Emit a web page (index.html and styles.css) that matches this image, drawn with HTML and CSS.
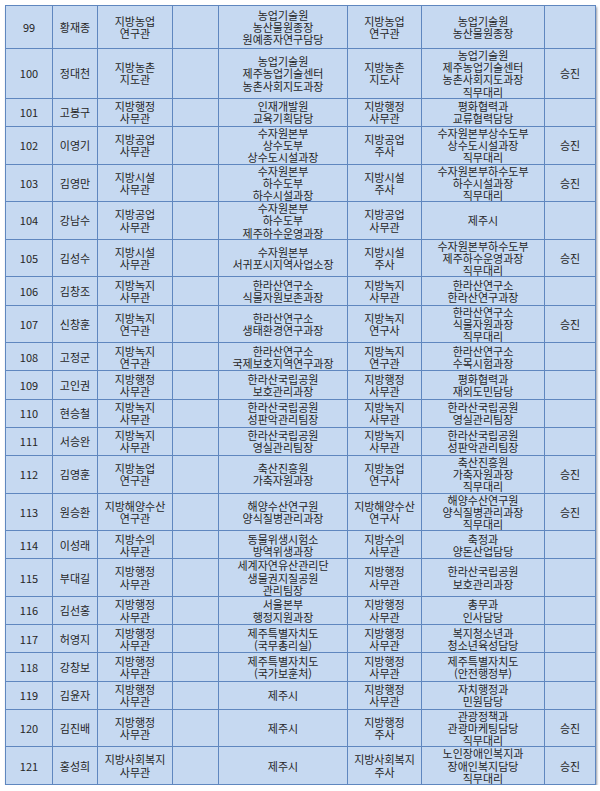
FILE: index.html
```html
<!DOCTYPE html>
<html lang="ko">
<head>
<meta charset="utf-8">
<title>인사발령</title>
<link rel="stylesheet" href="styles.css">
</head>
<body>
<table class="roster">
<colgroup>
<col class="c-no"><col class="c-name"><col class="c-grade"><col class="c-blank"><col class="c-dept"><col class="c-grade2"><col class="c-dept2"><col class="c-note">
</colgroup>
<tbody>
<tr class="r99"><td>99</td><td>황재종</td><td>지방농업<br>연구관</td><td></td><td>농업기술원<br>농산물원종장<br>원예종자연구담당</td><td>지방농업<br>연구관</td><td>농업기술원<br>농산물원종장</td><td></td></tr>
<tr class="r4"><td>100</td><td>정대천</td><td>지방농촌<br>지도관</td><td></td><td>농업기술원<br>제주농업기술센터<br>농촌사회지도과장</td><td>지방농촌<br>지도사</td><td>농업기술원<br>제주농업기술센터<br>농촌사회지도과장<br>직무대리</td><td>승진</td></tr>
<tr class="r2"><td>101</td><td>고봉구</td><td>지방행정<br>사무관</td><td></td><td>인재개발원<br>교육기획담당</td><td>지방행정<br>사무관</td><td>평화협력과<br>교류협력담당</td><td></td></tr>
<tr class="r3"><td>102</td><td>이영기</td><td>지방공업<br>사무관</td><td></td><td>수자원본부<br>상수도부<br>상수도시설과장</td><td>지방공업<br>주사</td><td>수자원본부상수도부<br>상수도시설과장<br>직무대리</td><td>승진</td></tr>
<tr class="r3"><td>103</td><td>김영만</td><td>지방시설<br>사무관</td><td></td><td>수자원본부<br>하수도부<br>하수시설과장</td><td>지방시설<br>주사</td><td>수자원본부하수도부<br>하수시설과장<br>직무대리</td><td>승진</td></tr>
<tr class="r3"><td>104</td><td>강남수</td><td>지방공업<br>사무관</td><td></td><td>수자원본부<br>하수도부<br>제주하수운영과장</td><td>지방공업<br>사무관</td><td>제주시</td><td></td></tr>
<tr class="r3"><td>105</td><td>김성수</td><td>지방시설<br>사무관</td><td></td><td>수자원본부<br>서귀포시지역사업소장</td><td>지방시설<br>주사</td><td>수자원본부하수도부<br>제주하수운영과장<br>직무대리</td><td>승진</td></tr>
<tr class="r2"><td>106</td><td>김창조</td><td>지방녹지<br>사무관</td><td></td><td>한라산연구소<br>식물자원보존과장</td><td>지방녹지<br>사무관</td><td>한라산연구소<br>한라산연구과장</td><td></td></tr>
<tr class="r3"><td>107</td><td>신창훈</td><td>지방녹지<br>연구관</td><td></td><td>한라산연구소<br>생태환경연구과장</td><td>지방녹지<br>연구사</td><td>한라산연구소<br>식물자원과장<br>직무대리</td><td>승진</td></tr>
<tr class="r2"><td>108</td><td>고정군</td><td>지방녹지<br>연구관</td><td></td><td>한라산연구소<br>국제보호지역연구과장</td><td>지방녹지<br>연구관</td><td>한라산연구소<br>수목시험과장</td><td></td></tr>
<tr class="r2"><td>109</td><td>고인권</td><td>지방행정<br>사무관</td><td></td><td>한라산국립공원<br>보호관리과장</td><td>지방행정<br>사무관</td><td>평화협력과<br>재외도민담당</td><td></td></tr>
<tr class="r2"><td>110</td><td>현승철</td><td>지방녹지<br>사무관</td><td></td><td>한라산국립공원<br>성판악관리팀장</td><td>지방녹지<br>사무관</td><td>한라산국립공원<br>영실관리팀장</td><td></td></tr>
<tr class="r2"><td>111</td><td>서승완</td><td>지방녹지<br>사무관</td><td></td><td>한라산국립공원<br>영실관리팀장</td><td>지방녹지<br>사무관</td><td>한라산국립공원<br>성판악관리팀장</td><td></td></tr>
<tr class="r3"><td>112</td><td>김영훈</td><td>지방농업<br>연구관</td><td></td><td>축산진흥원<br>가축자원과장</td><td>지방농업<br>연구사</td><td>축산진흥원<br>가축자원과장<br>직무대리</td><td>승진</td></tr>
<tr class="r3"><td>113</td><td>원승환</td><td>지방해양수산<br>연구관</td><td></td><td>해양수산연구원<br>양식질병관리과장</td><td>지방해양수산<br>연구사</td><td>해양수산연구원<br>양식질병관리과장<br>직무대리</td><td>승진</td></tr>
<tr class="r2"><td>114</td><td>이성래</td><td>지방수의<br>사무관</td><td></td><td>동물위생시험소<br>방역위생과장</td><td>지방수의<br>사무관</td><td>축정과<br>양돈산업담당</td><td></td></tr>
<tr class="r3"><td>115</td><td>부대길</td><td>지방행정<br>사무관</td><td></td><td>세계자연유산관리단<br>생물권지질공원<br>관리팀장</td><td>지방행정<br>사무관</td><td>한라산국립공원<br>보호관리과장</td><td></td></tr>
<tr class="r2"><td>116</td><td>김선홍</td><td>지방행정<br>사무관</td><td></td><td>서울본부<br>행정지원과장</td><td>지방행정<br>사무관</td><td>총무과<br>인사담당</td><td></td></tr>
<tr class="r2"><td>117</td><td>허영지</td><td>지방행정<br>사무관</td><td></td><td>제주특별자치도<br>(국무총리실)</td><td>지방행정<br>사무관</td><td>복지청소년과<br>청소년육성담당</td><td></td></tr>
<tr class="r2"><td>118</td><td>강창보</td><td>지방행정<br>사무관</td><td></td><td>제주특별자치도<br>(국가보훈처)</td><td>지방행정<br>사무관</td><td>제주특별자치도<br>(안전행정부)</td><td></td></tr>
<tr class="r2"><td>119</td><td>김윤자</td><td>지방행정<br>사무관</td><td></td><td>제주시</td><td>지방행정<br>사무관</td><td>자치행정과<br>민원담당</td><td></td></tr>
<tr class="r3"><td>120</td><td>김진배</td><td>지방행정<br>사무관</td><td></td><td>제주시</td><td>지방행정<br>주사</td><td>관광정책과<br>관광마케팅담당<br>직무대리</td><td>승진</td></tr>
<tr class="r3"><td>121</td><td>홍성희</td><td>지방사회복지<br>사무관</td><td></td><td>제주시</td><td>지방사회복지<br>주사</td><td>노인장애인복지과<br>장애인복지담당<br>직무대리</td><td>승진</td></tr>
</tbody>
</table>
</body>
</html>
```

FILE: styles.css
```css
html, body {
  margin: 0;
  padding: 0;
  background: #ffffff;
}

body {
  padding: 5px 0 0 5px;
  font-family: "Noto Sans CJK KR", "Noto Sans", sans-serif;
  font-size: 11px;
  color: #262626;
}

.roster {
  border-collapse: collapse;
  table-layout: fixed;
  width: 590px;
  background: #c6d9f1;
  box-shadow: 1px 2px 2px rgba(60, 70, 90, 0.55);
}

.c-no { width: 47px; }
.c-name { width: 45px; }
.c-grade { width: 75px; }
.c-blank { width: 46px; }
.c-dept { width: 129px; }
.c-grade2 { width: 74px; }
.c-dept2 { width: 123px; }
.c-note { width: 51px; }

.roster td {
  border: 1px solid #5f87bf;
  padding: 0 1px;
  text-align: center;
  vertical-align: middle;
  line-height: 12.2px;
  white-space: nowrap;
}

.r2 { height: 28.2px; }
.r3 { height: 37px; }
.r4 { height: 48px; }
.r99 { height: 43px; }
```
